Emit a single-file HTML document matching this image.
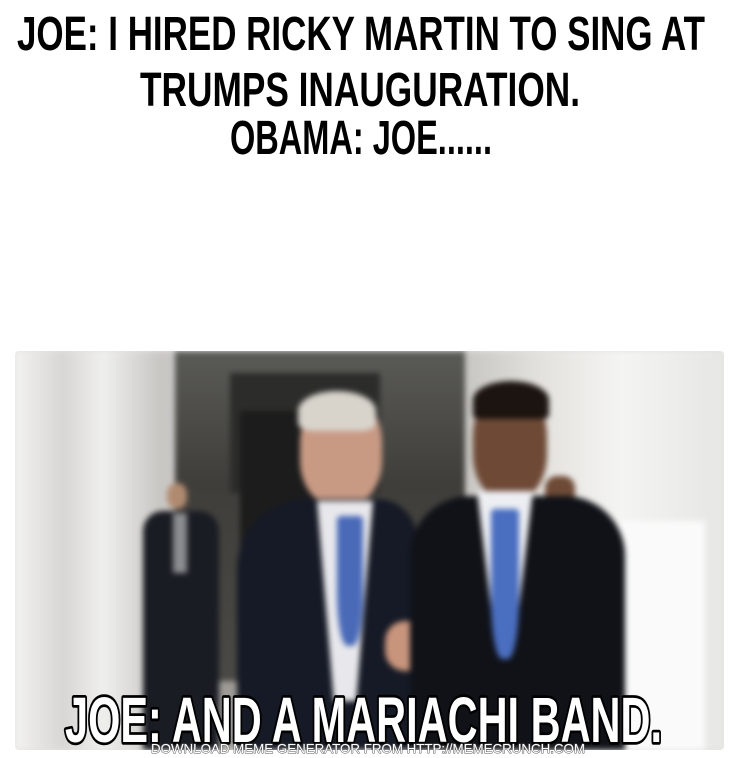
<!DOCTYPE html>
<html><head><meta charset="utf-8"><style>
html,body{margin:0;padding:0;background:#fff;width:736px;height:758px;overflow:hidden}
.a{position:absolute}
</style></head><body>
<div class="a" style="left:15px;top:351px;width:709px;height:399px;overflow:hidden;background:#e6e4e2;border-radius:4px">
<div class="a" style="left:0;top:0;width:709px;height:399px;filter:blur(3px)">
 <div class="a" style="left:0;top:0;width:160px;height:399px;background:linear-gradient(90deg,#f2f2f0,#d8d6d4 30%,#efefed 55%,#c9c7c4 90%)"></div>
 <div class="a" style="left:160px;top:0;width:290px;height:330px;background:linear-gradient(180deg,#5a5a56,#3f3e3a 40%,#4a4945)"></div>
 <div class="a" style="left:215px;top:22px;width:150px;height:120px;background:#2c2c2a"></div>
 <div class="a" style="left:225px;top:60px;width:110px;height:170px;background:#1c1c1c"></div>
 <div class="a" style="left:160px;top:330px;width:290px;height:69px;background:#9e9b96"></div>
 <div class="a" style="left:450px;top:0;width:259px;height:399px;background:linear-gradient(90deg,#c8c6c2,#e4e2de 30%,#f4f4f2 60%,#e6e6e4)"></div>
 <div class="a" style="left:590px;top:170px;width:100px;height:229px;background:#fafafa"></div>
 <div class="a" style="left:152px;top:132px;width:20px;height:26px;border-radius:45%;background:#b08a70"></div>
 <div class="a" style="left:128px;top:160px;width:76px;height:239px;border-radius:20px 20px 0 0;background:#1a1c24"></div>
 <div class="a" style="left:158px;top:162px;width:14px;height:60px;background:#8a8c90"></div>
 <div class="a" style="left:285px;top:42px;width:82px;height:112px;border-radius:45% 45% 40% 40%;background:#c89a84"></div>
 <div class="a" style="left:283px;top:40px;width:78px;height:40px;border-radius:50% 50% 20% 20%;background:#d8d4cc"></div>
 <div class="a" style="left:222px;top:148px;width:180px;height:251px;border-radius:70px 40px 0 0;background:#161a26"></div>
 <div class="a" style="left:302px;top:150px;width:56px;height:200px;background:#e8e8ec;clip-path:polygon(0 0,100% 0,70% 100%,30% 100%)"></div>
 <div class="a" style="left:322px;top:165px;width:26px;height:130px;background:#4a6ab8;border-radius:4px 4px 40% 40%"></div>
 <div class="a" style="left:370px;top:270px;width:50px;height:50px;border-radius:40%;background:#c8947c"></div>
 <div class="a" style="left:458px;top:36px;width:74px;height:112px;border-radius:45% 45% 40% 40%;background:#6e4a36"></div>
 <div class="a" style="left:458px;top:30px;width:76px;height:38px;border-radius:50% 50% 10% 10%;background:#1c1410"></div>
 <div class="a" style="left:530px;top:125px;width:30px;height:30px;border-radius:40%;background:#6e4a36"></div>
 <div class="a" style="left:395px;top:145px;width:215px;height:254px;border-radius:60px 60px 0 0;background:#101218"></div>
 <div class="a" style="left:462px;top:140px;width:56px;height:140px;background:#eceef2;clip-path:polygon(0 0,100% 0,70% 100%,30% 100%)"></div>
 <div class="a" style="left:476px;top:158px;width:28px;height:150px;background:#4a6ec0;border-radius:4px 4px 40% 40%"></div>
</div>
</div>
<svg class="a" style="left:0;top:0" width="736" height="758">
 <g font-family="Liberation Sans Narrow, Liberation Sans, sans-serif" font-weight="bold" stroke-linejoin="round">
  <g fill="#000" stroke="#fff" stroke-width="2.5" paint-order="stroke" font-size="40">
   <text transform="translate(17,50) scale(1,1.2)" textLength="688" lengthAdjust="spacingAndGlyphs">JOE: I HIRED RICKY MARTIN TO SING AT</text>
   <text transform="translate(140,106) scale(1,1.2)" textLength="440" lengthAdjust="spacingAndGlyphs">TRUMPS INAUGURATION.</text>
   <text transform="translate(230,154) scale(1,1.2)" textLength="262" lengthAdjust="spacingAndGlyphs">OBAMA: JOE......</text>
  </g>
  <text transform="translate(65,742) scale(1,1.1)" font-size="58" fill="#fff" stroke="#000" stroke-width="5" paint-order="stroke" textLength="597" lengthAdjust="spacingAndGlyphs">JOE: AND A MARIACHI BAND.</text>
  <text x="151" y="753" font-size="13" font-weight="normal" fill="#fff" stroke="#555" stroke-width="1" paint-order="stroke" textLength="434" lengthAdjust="spacingAndGlyphs">DOWNLOAD MEME GENERATOR FROM HTTP://MEMECRUNCH.COM</text>
 </g>
</svg>
</body></html>
